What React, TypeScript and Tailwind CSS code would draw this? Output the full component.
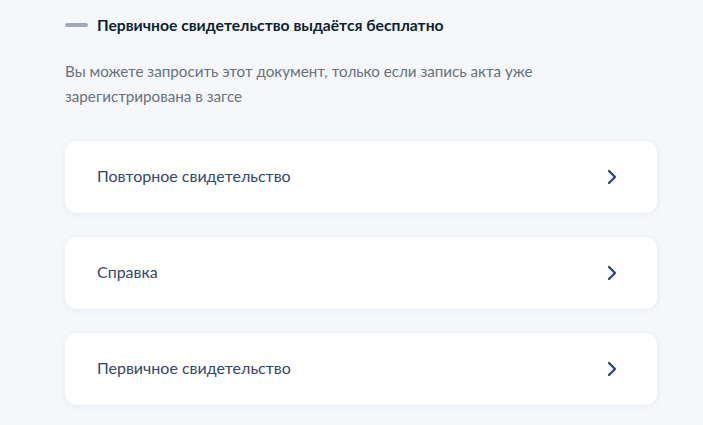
const items = ['Повторное свидетельство', 'Справка', 'Первичное свидетельство']

function Chevron() {
    return (
        <svg width="12" height="18" viewBox="0 0 12 18" fill="none">
            <path d="M3 3l6 6-6 6" stroke="#234b8e" strokeWidth="2.4" strokeLinecap="round" strokeLinejoin="round" />
        </svg>
    )
}

export default function App() {
    return (
        <div className="min-h-[425px] bg-[#f5f7fa] px-[65px] pt-[13px] font-['Lato',sans-serif]">
            <div className="flex items-center gap-[9px]">
                <span className="h-[4px] w-[23px] rounded-full bg-[#a0a9b8]" />
                <span className="text-[15.7px] font-bold leading-[24px] text-[#0b1f33]">Первичное свидетельство выдаётся бесплатно</span>
            </div>
            <p className="mt-[22px] max-w-[500px] text-[15.2px] leading-[25px] text-[#66727f]">
                Вы можете запросить этот документ, только если запись акта уже зарегистрирована в загсе
            </p>
            <div className="mt-[32px] flex w-[592px] flex-col gap-[24px]">
                {items.map((t) => (
                    <div key={t} className="flex h-[72px] items-center justify-between rounded-[12px] bg-white pl-[32px] pr-[39px] shadow-[0_1px_6px_rgba(40,80,140,0.08)]">
                        <span className="text-[16px] leading-[22px] text-[#34476b] -mt-[2px]">{t}</span>
                        <Chevron />
                    </div>
                ))}
            </div>
        </div>
    )
}
